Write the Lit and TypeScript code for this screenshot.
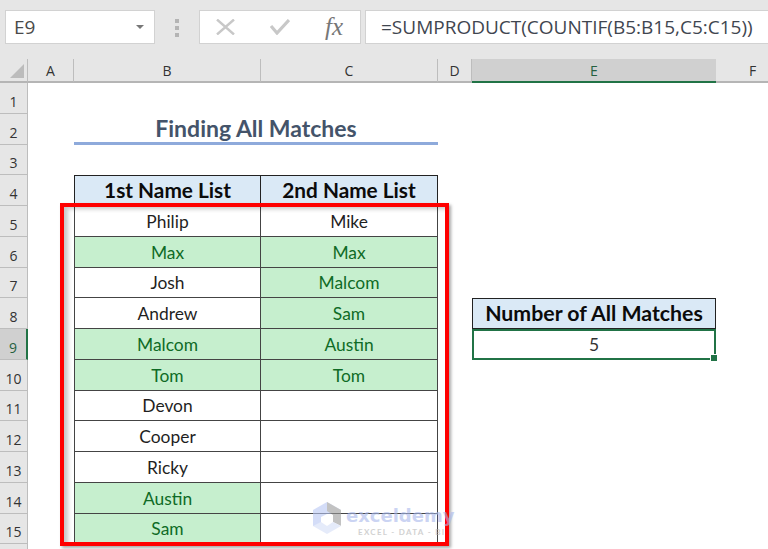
import { LitElement, html, css, svg } from "lit";
import { customElement } from "lit/decorators.js";

const COLS = ["A", "B", "C", "D", "E", "F"];
const FIRST = ["Philip", "Max", "Josh", "Andrew", "Malcom", "Tom", "Devon", "Cooper", "Ricky", "Austin", "Sam"];
const SECOND = ["Mike", "Max", "Malcom", "Sam", "Austin", "Tom", "", "", "", "", ""];
const MATCH_FIRST = new Set(["Max", "Malcom", "Tom", "Austin", "Sam"]);

@customElement("app-root")
export class AppRoot extends LitElement {
  static styles = css`
    :host { display: block; width: 768px; height: 549px; overflow: hidden; position: relative; background: #fff; font-family: "Lato", "Open Sans", sans-serif; color: #1c1c1c; }
    .bar { height: 59px; box-sizing: border-box; background: #e6e6e6; padding: 10px 0 0 5px; display: flex; align-items: flex-start; }
    .box { height: 34px; box-sizing: border-box; background: #fff; border: 1px solid #d2d2d2; display: flex; align-items: center; }
    .name { width: 150px; padding: 0 8px; justify-content: space-between; font-size: 19px; color: #4a4a4a; font-family: "Open Sans", sans-serif; }
    .caret { width: 0; height: 0; border-left: 4px solid transparent; border-right: 4px solid transparent; border-top: 4px solid #777; margin-right: 2px; }
    .grip { width: 4px; margin: 9px 20px 0 20px; display: flex; flex-direction: column; gap: 3px; }
    .grip i { display: block; width: 4px; height: 4px; background: #b4b4b4; }
    .fx { width: 162px; justify-content: space-between; padding: 0 17px 0 16px; }
    .fxt { font-family: "Liberation Serif", serif; font-style: italic; font-size: 25px; line-height: 26px; color: #777; }
    .formula { flex: 1; margin-left: 4px; padding-left: 15px; font-size: 19px; color: #3f4650; font-family: "Open Sans", sans-serif; border-right: 0; white-space: nowrap; }
    .sheet { display: grid; grid-template-columns: 28px 46px 187px 177px 34px 244px 74px; grid-template-rows: 24px repeat(16, 30.75px); }
    .corner, .ch, .rh { background: #e6e6e6; box-sizing: border-box; display: flex; align-items: center; justify-content: center; color: #333; font-family: "Open Sans", sans-serif; font-size: 14px; }
    .corner { border-right: 1px solid #bdbdbd; border-bottom: 2px solid #b5b5b5; position: relative; }
    .tri { position: absolute; right: 3px; bottom: 3px; width: 0; height: 0; border-left: 14px solid transparent; border-bottom: 14px solid #bcbcbc; }
    .ch { border-bottom: 2px solid #b5b5b5; border-right: 1px solid #bdbdbd; }
    .ch.sel { background: #d0d0d0; border-bottom: 2px solid #217346; border-right: 0; color: #25603f; }
    .rh { border-bottom: 1px solid #bdbdbd; border-right: 1px solid #bdbdbd; padding-top: 7px; }
    .rh.sel { background: #d0d0d0; border-right: 2px solid #217346; color: #25603f; }
    .cell { box-sizing: border-box; display: flex; align-items: center; justify-content: center; font-size: 17.4px; min-width: 0; }
    .title { font-weight: bold; font-size: 23px; color: #44546a; border-bottom: 3px solid #8eaadb; }
    .hd { background: #dae9f6; font-weight: bold; font-size: 20.8px; color: #0b0b0b; border: 1px solid #222; padding-bottom: 2px; }
    .hd.next { border-left: 0; }
    .num { font-size: 21.3px; padding-bottom: 1px; }
    .td { border: 1px solid #444; border-top: 0; color: #1f1f1f; padding-top: 1px; }
    .td.next { border-left: 0; }
    .td.m { background: #c6efce; color: #0f6b26; }
    .res { color: #333; position: relative; border: 2px solid #217346; }
    .hnd { position: absolute; right: -4px; bottom: -4px; width: 6px; height: 6px; background: #217346; border: 1px solid #fff; }
    .red { position: absolute; left: 60px; top: 203px; width: 389px; height: 343px; box-sizing: border-box; border: 4px solid #f00; box-shadow: 2px 2px 3px rgba(0,0,0,.35), inset 5px 3px 4px -1px rgba(0,0,0,.22); pointer-events: none; }
    .wm { position: absolute; left: 313px; top: 502px; display: flex; gap: 5px; opacity: .6; pointer-events: none; }
    .wmt { display: flex; flex-direction: column; padding-top: 3px; }
    .wm1 { font-family: "DejaVu Sans", sans-serif; font-weight: bold; font-size: 18px; line-height: 22px; color: #a9b9ec; }
    .wm2 { font-size: 8px; line-height: 10px; padding-left: 12px; font-weight: bold; letter-spacing: 1.3px; color: #b4b4b4; white-space: nowrap; }
    svg { display: block; }
  `;

  private cell(col: number, row: number, cls: string, text: string | number, span = 1) {
    const st = `grid-column:${col + 2}/span ${span};grid-row:${row + 1}`;
    return html`<div class=${cls} style=${st}>${text}</div>`;
  }

  render() {
    return html`
      <div class="bar">
        <div class="box name"><span>E9</span><span class="caret"></span></div>
        <div class="grip"><i></i><i></i><i></i></div>
        <div class="box fx">
          <svg width="19" height="16" viewBox="0 0 19 16" fill="none" stroke="#c8c8c8" stroke-width="2.4"><path d="M1 0.5L18 15.5M18 0.5L1 15.5"/></svg>
          <svg width="20" height="16" viewBox="0 0 20 16" fill="none" stroke="#c8c8c8" stroke-width="3.2"><path d="M1 7L7 14L19 1"/></svg>
          <span class="fxt">fx</span>
        </div>
        <div class="box formula">=SUMPRODUCT(COUNTIF(B5:B15,C5:C15))</div>
      </div>
      <div class="sheet">
        <div class="corner"><span class="tri"></span></div>
        ${COLS.map((c) => html`<div class="ch ${c === "E" ? "sel" : ""}">${c}</div>`)}
        ${Array.from({ length: 16 }, (_, i) => html`<div class="rh ${i + 1 === 9 ? "sel" : ""}" style="grid-column:1;grid-row:${i + 2}">${i < 15 ? i + 1 : ""}</div>`)}
        ${this.cell(1, 2, "cell title", "Finding All Matches", 2)}
        ${this.cell(1, 4, "cell hd", "1st Name List")}
        ${this.cell(2, 4, "cell hd next", "2nd Name List")}
        ${FIRST.map((n, i) => this.cell(1, 5 + i, `cell td ${MATCH_FIRST.has(n) ? "m" : ""}`, n))}
        ${SECOND.map((n, i) => this.cell(2, 5 + i, `cell td next ${n && n !== "Mike" ? "m" : ""}`, n))}
        ${this.cell(4, 8, "cell hd num", "Number of All Matches")}
        <div class="cell res" style="grid-column:6;grid-row:10">5<span class="hnd"></span></div>
      </div>
      <div class="red"></div>
      <div class="wm">
        <svg width="28" height="32" viewBox="0 0 28 32">
          ${svg`<path d="M14 0L28 8V12L14 12L8 15V24L0 24V8Z" fill="#b9c8f5"/><path d="M14 0L28 8V24L20 20V13L14 9Z" fill="#9b9b9b"/><path d="M0 24L8 20L14 24L20 20L28 24L14 32Z" fill="#d5def8"/>`}
        </svg>
        <div class="wmt"><span class="wm1">exceldemy</span><span class="wm2">EXCEL - DATA - BI</span></div>
      </div>
    `;
  }
}
